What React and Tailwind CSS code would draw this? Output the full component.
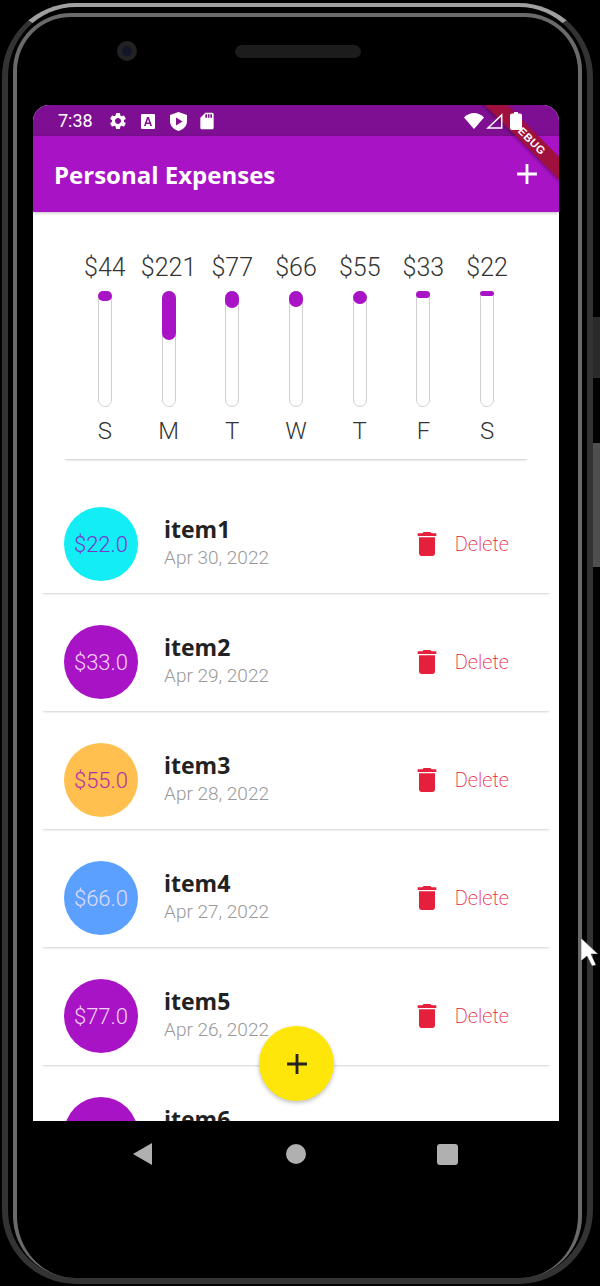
import React from 'react'
import { MdAdd, MdDelete, MdSettings, MdSdStorage } from 'react-icons/md'

const days = [
  { amount: '$44', day: 'S', fill: 'h-[10px]' },
  { amount: '$221', day: 'M', fill: 'h-[49px]' },
  { amount: '$77', day: 'T', fill: 'h-[17px]' },
  { amount: '$66', day: 'W', fill: 'h-[16px]' },
  { amount: '$55', day: 'T', fill: 'h-[13px]' },
  { amount: '$33', day: 'F', fill: 'h-[7px]' },
  { amount: '$22', day: 'S', fill: 'h-[5px]' },
]

const items = [
  { title: 'item1', date: 'Apr 30, 2022', amount: '$22.0', circle: 'bg-[#12eef3] text-[#7a35cc]' },
  { title: 'item2', date: 'Apr 29, 2022', amount: '$33.0', circle: 'bg-[#a913c6] text-[#f3d4f8]' },
  { title: 'item3', date: 'Apr 28, 2022', amount: '$55.0', circle: 'bg-[#ffc04f] text-[#b52ea8]' },
  { title: 'item4', date: 'Apr 27, 2022', amount: '$66.0', circle: 'bg-[#5ba0ff] text-[#e0dcf8]' },
  { title: 'item5', date: 'Apr 26, 2022', amount: '$77.0', circle: 'bg-[#a913c6] text-[#f3d4f8]' },
  { title: 'item6', date: 'Apr 25, 2022', amount: '$88.0', circle: 'bg-[#a913c6] text-[#f3d4f8]' },
]

function StatusIcons() {
  return (
    <div className="flex items-center">
      <MdSettings className="ml-[15px] text-white" size={20} />
      <svg className="ml-[13px]" width="14" height="16" viewBox="0 0 14 16">
        <path fill="#fff" d="M1 1h12a1 1 0 0 1 1 1v13a1 1 0 0 1-1 1H1a1 1 0 0 1-1-1V2a1 1 0 0 1 1-1z" />
        <path fill="#86108f" d="M6 4h2l3 9H9.2l-.5-2H5.3l-.5 2H3zm-.2 5.500h2.400L7 6z" />
      </svg>
      <svg className="ml-[15px]" width="17" height="19" viewBox="0 0 17 19">
        <path fill="#fff" d="M8.500 0 17 3v6c0 5-3.500 8.500-8.500 10C3.500 17.500 0 14 0 9V3z" />
        <path fill="#86108f" d="M6 5.500 12.500 9.500 6 13.500z" />
      </svg>
      <MdSdStorage className="ml-[10px] text-white" size={20} />
    </div>
  )
}

function ChartColumn({ amount, day, fill }) {
  return (
    <div className="flex flex-col items-center">
      <span className="h-[28px] text-[25px] leading-[28px] font-light text-[#333]">{amount}</span>
      <div className="mt-[9px] flex h-[116px] w-[14px] flex-col rounded-full border border-[#cfcfcf] bg-white">
        <div className={`-mx-px -mt-px rounded-full bg-[#a913c6] ${fill}`} />
      </div>
      <span className="mt-[10px] h-[28px] text-[24px] leading-[28px] font-light text-[#333]">{day}</span>
    </div>
  )
}

function ExpenseRow({ title, date, amount, circle }) {
  return (
    <div className="mx-[7px] mt-[20px] flex h-[98px] shrink-0 items-center bg-white pr-[43px] pl-[24px] shadow-[0_4px_2px_-3px_rgba(0,0,0,0.18)]">
      <div className={`flex h-[74px] w-[74px] shrink-0 items-center justify-center rounded-full text-[22px] font-light ${circle}`}>
        {amount}
      </div>
      <div className="ml-[26px] flex flex-1 flex-col pb-[2px]">
        <span className="font-['Open_Sans'] text-[23px] leading-[30px] font-bold text-[#222]">{title}</span>
        <span className="text-[19px] leading-[28px] font-light text-[#999]">{date}</span>
      </div>
      <MdDelete className="text-[#e5203c]" size={32} />
      <span className="ml-[12px] text-[20px] font-extralight text-[#e5203c]">Delete</span>
    </div>
  )
}

export default function App() {
  return (
    <div className="relative h-[1286px] w-[600px] overflow-hidden bg-black pt-[3px] pl-[2px] font-['Roboto',sans-serif]">
      {/* Side buttons */}
      <div className="absolute top-[317px] left-[593px] h-[61px] w-[7px] bg-[#2a2a2a]" />
      <div className="absolute top-[443px] left-[593px] h-[124px] w-[7px] bg-[#4f4f4f]" />

      {/* Phone body */}
      <div className="h-[1281px] w-[591px] rounded-[74px] border-x-[6px] border-t-[4px] border-b-[6px] border-[#333] border-t-[#a0a0a0] px-[5px] pt-[6px]">
        <div className="flex h-full flex-col rounded-t-[58px] rounded-b-[62px] border-x-[4px] border-t-[4px] border-[#6a6a6a] pr-[19px] pl-[16px]">
          {/* Top bezel */}
          <div className="flex h-[88px] shrink-0 items-start">
            <div className="mt-[24px] ml-[84px] h-[20px] w-[20px] rounded-full border-[5px] border-[#222] bg-[#14142a]" />
            <div className="mt-[28px] ml-[98px] h-[13px] w-[126px] rounded-full bg-[#1c1c1c]" />
          </div>

          {/* Screen */}
          <div className="relative flex h-[1016px] w-[526px] shrink-0 flex-col overflow-hidden rounded-t-[16px] bg-white">
            <div className="flex h-[31px] shrink-0 items-center bg-[#7e0f93] pt-[1px] pr-[37px] pl-[25px] text-white">
              <span className="text-[18px] leading-none">7:38</span>
              <StatusIcons />
              <div className="ml-auto flex items-center">
                <svg width="20" height="16" viewBox="0 0 20 16">
                  <path fill="#fff" d="M0 4.500C5.500-1.500 14.500-1.500 20 4.500L10 16z" />
                </svg>
                <svg className="relative z-20 ml-[2px]" width="17" height="16" viewBox="0 0 17 16">
                  <path fill="none" stroke="#fff" strokeWidth="1.500" d="M15.700 2v13H2z" />
                </svg>
                <svg className="relative z-20 ml-[7px]" width="12" height="18" viewBox="0 0 12 18">
                  <path fill="#fff" d="M4 0h4v1.500h2a2 2 0 0 1 2 2V16a2 2 0 0 1-2 2H2a2 2 0 0 1-2-2V3.500a2 2 0 0 1 2-2h2z" />
                </svg>
              </div>
            </div>

            <header className="z-10 flex h-[76px] shrink-0 items-center justify-between bg-[#a913c6] pr-[15px] pl-[21px] shadow-[0_1px_3px_rgba(0,0,0,0.25)]">
              <h1 className="pt-[1px] font-['Open_Sans'] text-[24px] font-bold text-white">Personal Expenses</h1>
              <MdAdd className="text-white" size={34} />
            </header>

            {/* Weekly chart */}
            <section className="mx-[29px] mt-[42px] grid h-[205px] shrink-0 grid-cols-7 bg-white px-[11px] shadow-[0_4px_2px_-3px_rgba(0,0,0,0.22)]">
              {days.map((d, i) => (
                <ChartColumn key={i} {...d} />
              ))}
            </section>

            {/* Transactions */}
            <div className="mt-[16px] flex flex-col">
              {items.map((item) => (
                <ExpenseRow key={item.title} {...item} />
              ))}
            </div>

            {/* Debug banner */}
            <div className="absolute top-[25px] left-[436px] z-10 flex h-[16px] w-[120px] rotate-45 items-center justify-center bg-[#a0103f] font-['Liberation_Sans'] text-[11px] font-bold tracking-[0.5px] text-white shadow-[0_2px_3px_rgba(0,0,0,0.25)]">
              DEBUG
            </div>

            {/* Add button */}
            <button className="absolute top-[921px] left-[226px] z-10 flex h-[75px] w-[75px] items-center justify-center rounded-full bg-[#ffe60a] shadow-[0_2px_4px_rgba(0,0,0,0.25)]">
              <MdAdd className="text-[#222]" size={34} />
            </button>
          </div>

          {/* Navigation bar */}
          <nav className="flex h-[66px] shrink-0 items-center pl-[100px]">
            <svg width="20" height="22" viewBox="0 0 20 22">
              <path fill="#b0b0b0" d="M0 11 19 0v22z" />
            </svg>
            <div className="ml-[133px] h-[20px] w-[20px] rounded-full bg-[#b0b0b0]" />
            <div className="ml-[131px] h-[21px] w-[21px] rounded-[3px] bg-[#b0b0b0]" />
          </nav>
        </div>
      </div>

      {/* Mouse cursor */}
      <svg className="absolute top-[938px] left-[581px]" width="18" height="29" viewBox="0 0 18 29">
        <path fill="#fff" stroke="#333" strokeWidth="0.500" d="M0 0 17 16H10L15 27 11 28 6 18 0 23z" />
      </svg>
    </div>
  )
}
